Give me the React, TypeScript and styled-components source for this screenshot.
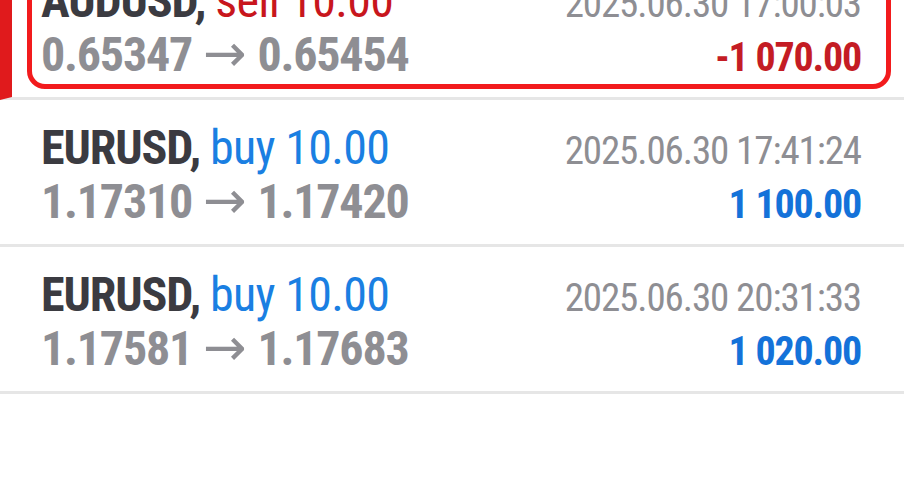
import React from "react";
import styled, { createGlobalStyle } from "styled-components";

const GlobalStyle = createGlobalStyle`
  html, body { margin: 0; padding: 0; background: #ffffff; overflow: hidden; }
  body { font-family: "Roboto Condensed", Roboto, "Liberation Sans", sans-serif; }
`;

const List = styled.div`
  margin-top: -47px;
  display: flex;
  flex-direction: column;
`;

const Row = styled.div<{ $selected?: boolean }>`
  display: block;
  border-bottom: 3px solid #e6e6e6;
  border-left: ${(p) => (p.$selected ? "12px solid #e01a1c" : "0 solid transparent")};
  padding: 0 13px 8px ${(p) => (p.$selected ? "15px" : "27px")};
`;

const Card = styled.div<{ $selected?: boolean }>`
  border: 5px solid ${(p) => (p.$selected ? "#f21b1d" : "transparent")};
  border-radius: 18px;
  padding: 17px 25px 5px 9px;
  display: flex;
  flex-direction: column;
`;

const Line = styled.div`
  display: flex;
  justify-content: space-between;
  align-items: baseline;
  height: 52px;
  line-height: 52px;
  white-space: nowrap;
`;

const Symbol = styled.span`
  font-size: 48px;
  font-weight: 700;
  letter-spacing: -1.1px;
  color: #3b3b41;
`;

const Side = styled.span<{ $buy: boolean }>`
  font-size: 48px;
  font-weight: 400;
  letter-spacing: -0.7px;
  color: ${(p) => (p.$buy ? "#1a7fe2" : "#c8161d")};
`;

const Prices = styled.span`
  font-size: 48px;
  font-weight: 700;
  letter-spacing: -1.2px;
  color: #8e8e93;
`;

const Arrow = styled.span`
  font-family: "DejaVu Sans", sans-serif;
  font-weight: 400;
  font-size: 52px;
  letter-spacing: 0;
  margin: 0 1px;
`;

const Time = styled.span`
  font-size: 39px;
  font-weight: 400;
  letter-spacing: -1.1px;
  color: #8e8e93;
`;

const Profit = styled.span<{ $positive: boolean }>`
  font-size: 40px;
  font-weight: 700;
  letter-spacing: -1.2px;
  color: ${(p) => (p.$positive ? "#1472d9" : "#c41c24")};
`;

type Deal = {
  symbol: string;
  side: "buy" | "sell";
  volume: string;
  time: string;
  open: string;
  close: string;
  profit: string;
  positive: boolean;
  selected?: boolean;
};

const deals: Deal[] = [
  {
    symbol: "AUDUSD",
    side: "sell",
    volume: "10.00",
    time: "2025.06.30 17:00:03",
    open: "0.65347",
    close: "0.65454",
    profit: "-1 070.00",
    positive: false,
    selected: true,
  },
  {
    symbol: "EURUSD",
    side: "buy",
    volume: "10.00",
    time: "2025.06.30 17:41:24",
    open: "1.17310",
    close: "1.17420",
    profit: "1 100.00",
    positive: true,
  },
  {
    symbol: "EURUSD",
    side: "buy",
    volume: "10.00",
    time: "2025.06.30 20:31:33",
    open: "1.17581",
    close: "1.17683",
    profit: "1 020.00",
    positive: true,
  },
];

export default function App() {
  return (
    <>
      <GlobalStyle />
      <List>
        {deals.map((d, i) => (
          <Row key={i} $selected={d.selected}>
            <Card $selected={d.selected}>
              <Line>
                <span>
                  <Symbol>{d.symbol}, </Symbol>
                  <Side $buy={d.side === "buy"}>
                    {d.side} {d.volume}
                  </Side>
                </span>
                <Time>{d.time}</Time>
              </Line>
              <Line>
                <Prices>
                  {d.open} <Arrow>→</Arrow> {d.close}
                </Prices>
                <Profit $positive={d.positive}>{d.profit}</Profit>
              </Line>
            </Card>
          </Row>
        ))}
      </List>
    </>
  );
}
